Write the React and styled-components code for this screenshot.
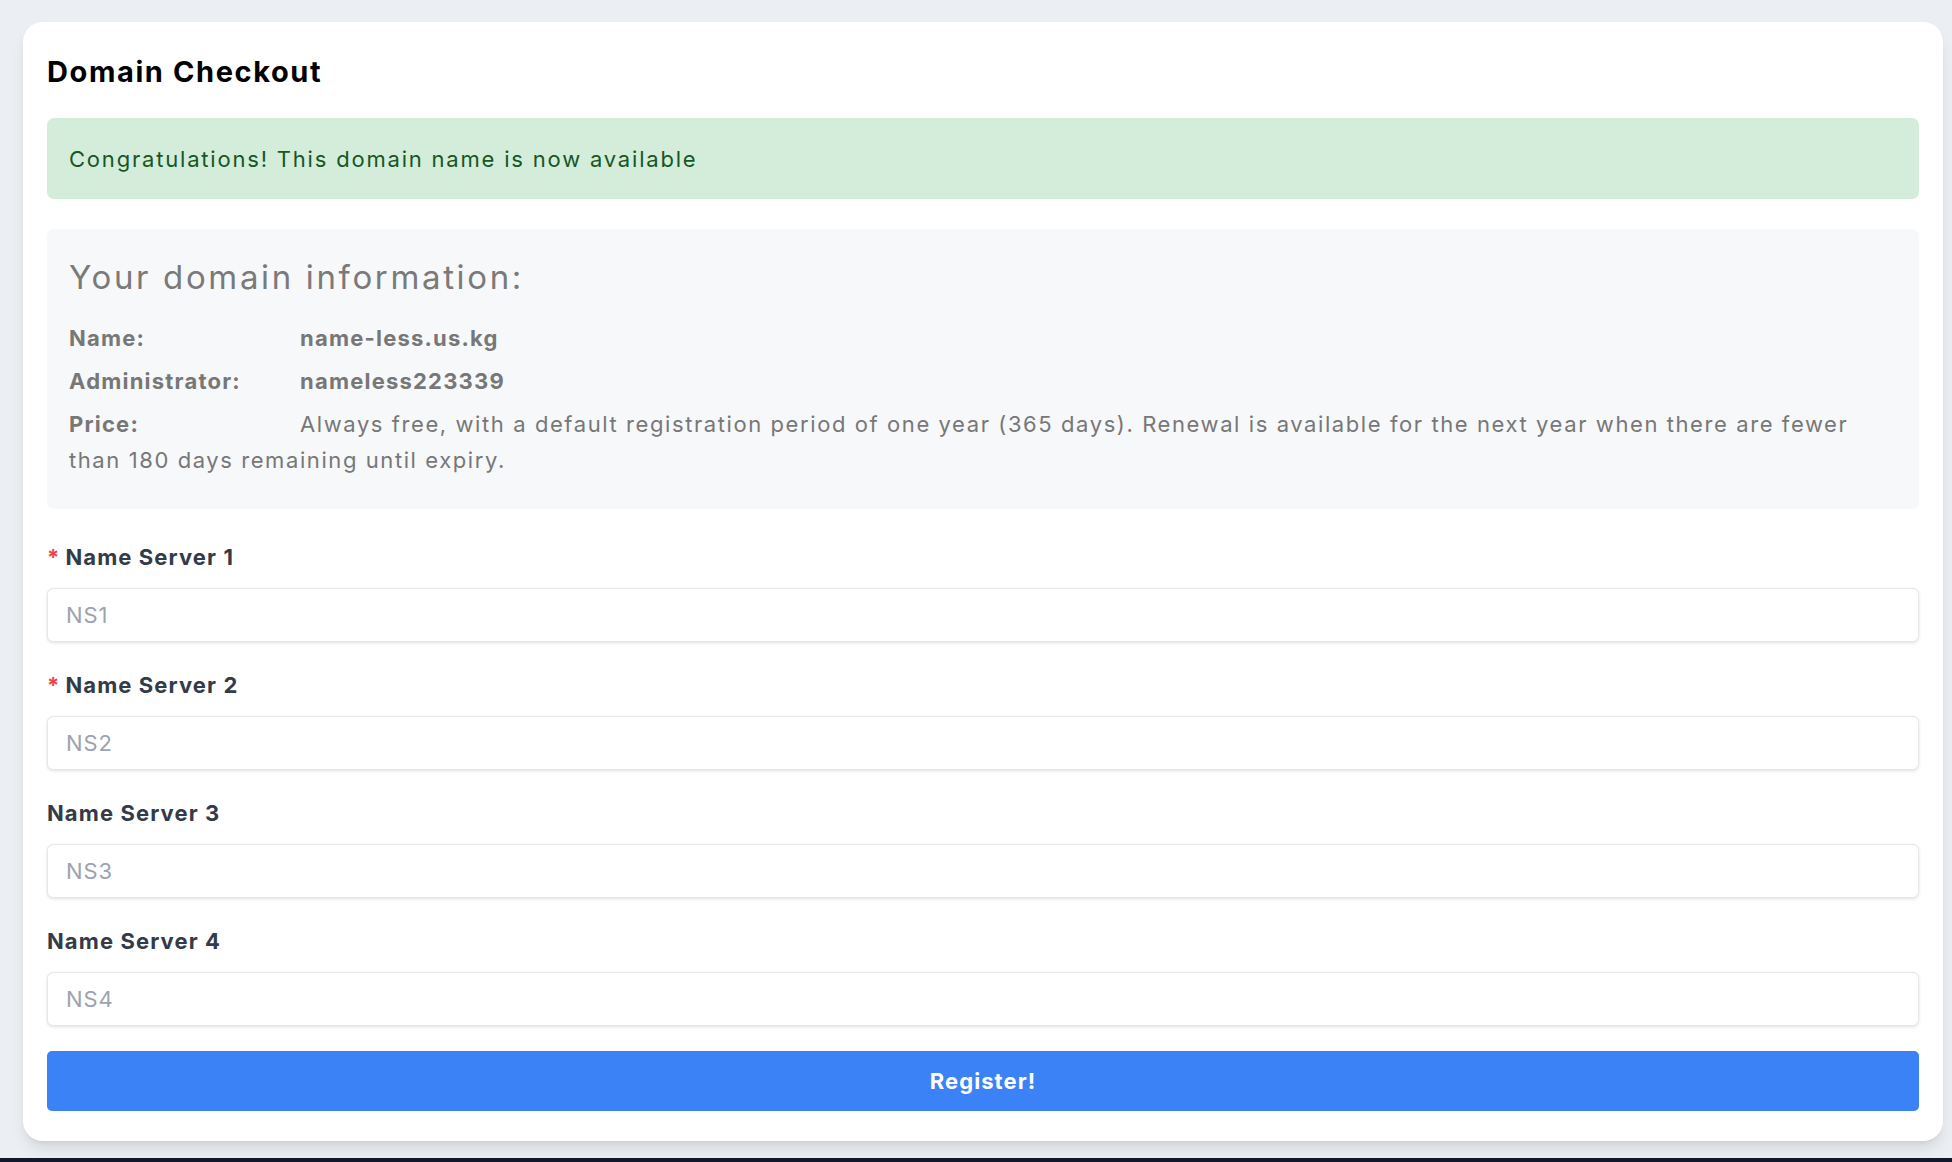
import React from "react";
import styled, { createGlobalStyle } from "styled-components";

const GlobalStyle = createGlobalStyle`
  html, body {
    margin: 0;
    padding: 0;
    background: #ebeff3;
    font-family: "Inter", "Liberation Sans", sans-serif;
  }
  * {
    box-sizing: border-box;
  }
`;

const Page = styled.div`
  padding: 22px 9px 17px 23px;
`;

const Card = styled.div`
  background: #ffffff;
  border-radius: 20px;
  padding: 33px 24px 30px;
  box-shadow: 0 10px 15px -3px rgba(0, 0, 0, 0.1), 0 4px 6px -4px rgba(0, 0, 0, 0.1);
`;

const Title = styled.h1`
  margin: 0;
  font-size: 29px;
  line-height: 34px;
  font-weight: 700;
  letter-spacing: 0.055em;
  color: #000;
`;

const Alert = styled.div`
  margin-top: 29px;
  height: 81px;
  display: flex;
  align-items: center;
  padding: 0 22px;
  background: #d4edda;
  color: #155724;
  border-radius: 7px;
  font-size: 22px;
  letter-spacing: 0.082em;
`;

const InfoBox = styled.div`
  margin-top: 30px;
  background: #f7f8fa;
  border-radius: 7px;
  padding: 26px 22px 31px;
  color: #777777;
`;

const InfoHeading = styled.h2`
  margin: 0 0 21px;
  font-size: 33px;
  line-height: 44px;
  font-weight: 400;
  letter-spacing: 0.08em;
  color: #7a7a7a;
`;

const InfoRow = styled.div`
  display: flex;
  margin: 0 0 7px;
  font-size: 22px;
  line-height: 36px;
  font-weight: 700;
  letter-spacing: 0.055em;
`;

const InfoText = styled.p`
  margin: 0;
  font-size: 22px;
  line-height: 36px;
  font-weight: 400;
  letter-spacing: 0.072em;
`;

const InfoLabel = styled.span`
  display: inline-block;
  flex: none;
  width: 231px;
  font-weight: 700;
  letter-spacing: 0.055em;
`;

const Form = styled.form`
  margin-top: 33px;
`;

const Field = styled.div`
  margin-bottom: 28px;
`;

const Label = styled.label`
  display: block;
  font-size: 22px;
  line-height: 30px;
  font-weight: 700;
  letter-spacing: 0.05em;
  color: #333a48;
  margin-bottom: 16px;
`;

const Star = styled.span`
  color: #ef4444;
  margin-right: 5px;
`;

const Input = styled.input`
  display: block;
  width: 100%;
  height: 54px;
  padding: 0 18px;
  border: 1px solid #e5e7eb;
  border-radius: 6px;
  box-shadow: 0 1px 3px rgba(0, 0, 0, 0.12);
  font-family: inherit;
  font-size: 22px;
  letter-spacing: 0.04em;
  color: #374151;
  outline: none;

  &::placeholder {
    color: #9ca3af;
  }
`;

const Button = styled.button`
  display: block;
  width: 100%;
  height: 60px;
  margin-top: -3px;
  border: none;
  border-radius: 5px;
  background: #3b82f6;
  color: #ffffff;
  font-family: inherit;
  font-size: 22px;
  font-weight: 700;
  letter-spacing: 0.05em;
  cursor: pointer;
`;

const Footer = styled.div`
  height: 60px;
  background: #111827;
`;

const servers = [
  { label: "Name Server 1", placeholder: "NS1", required: true },
  { label: "Name Server 2", placeholder: "NS2", required: true },
  { label: "Name Server 3", placeholder: "NS3" },
  { label: "Name Server 4", placeholder: "NS4" },
];

export default function App() {
  return (
    <>
      <GlobalStyle />
      <Page>
        <Card>
          <Title>Domain Checkout</Title>
          <Alert>Congratulations! This domain name is now available</Alert>
          <InfoBox>
            <InfoHeading>Your domain information:</InfoHeading>
            <InfoRow>
              <InfoLabel>Name:</InfoLabel>
              <span>name-less.us.kg</span>
            </InfoRow>
            <InfoRow>
              <InfoLabel>Administrator:</InfoLabel>
              <span>nameless223339</span>
            </InfoRow>
            <InfoText>
              <InfoLabel>Price:</InfoLabel>Always free, with a default registration period of one
              year (365 days). Renewal is available for the next year when there are fewer than 180
              days remaining until expiry.
            </InfoText>
          </InfoBox>
          <Form onSubmit={(e) => e.preventDefault()}>
            {servers.map((s) => (
              <Field key={s.label}>
                <Label>
                  {s.required && <Star>*</Star>}
                  {s.label}
                </Label>
                <Input placeholder={s.placeholder} />
              </Field>
            ))}
            <Button type="submit">Register!</Button>
          </Form>
        </Card>
      </Page>
      <Footer />
    </>
  );
}
